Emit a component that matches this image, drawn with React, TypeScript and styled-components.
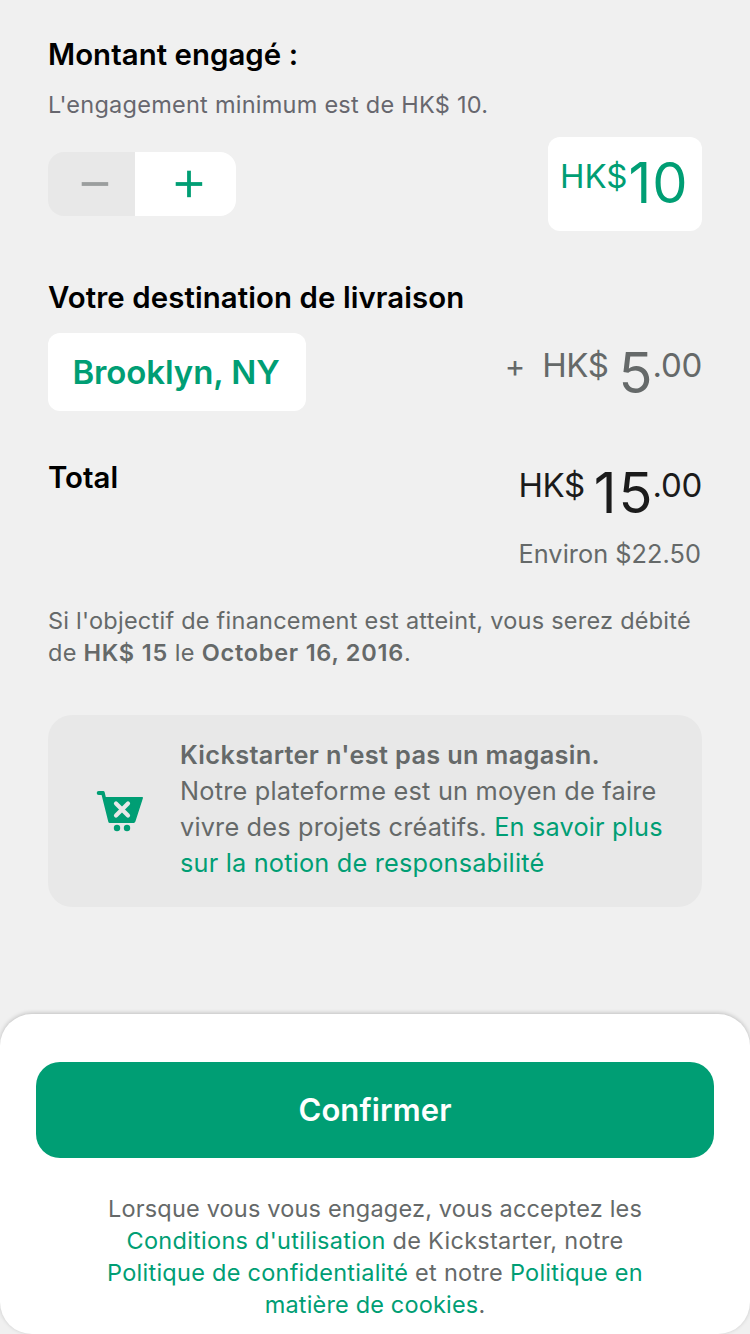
import React from "react";
import styled, { createGlobalStyle } from "styled-components";

const green = "#009e74";
const gray = "#656969";

const GlobalStyle = createGlobalStyle`
  * { box-sizing: border-box; }
  body {
    margin: 0;
    background: #f0f0f0;
    font-family: Inter, "Liberation Sans", sans-serif;
    font-kerning: normal;
  }
  h2, p { margin: 0; }
  button { font: inherit; border: 0; padding: 0; cursor: pointer; }
`;

const Screen = styled.div`
  width: 750px;
  height: 1334px;
  display: flex;
  flex-direction: column;
  justify-content: space-between;
  overflow: hidden;
`;

const Content = styled.main`
  padding: 37px 48px 0;
`;

const Heading = styled.h2<{ $track?: number }>`
  font-size: 29.4px;
  line-height: 36px;
  font-weight: 600;
  color: #000;
  white-space: nowrap;
  letter-spacing: ${(p) => p.$track ?? 0}px;
`;

const Hint = styled.p`
  && { margin-top: 16px; }
  font-size: 23.5px;
  line-height: 32px;
  letter-spacing: 0.25px;
  color: #67676e;
`;

const Row = styled.section<{ $gap: number; $align?: string }>`
  margin-top: ${(p) => p.$gap}px;
  display: flex;
  justify-content: space-between;
  align-items: ${(p) => p.$align ?? "flex-start"};
`;

const Block = styled.section`
  margin-top: 49px;
`;

const Stepper = styled.div`
  display: flex;
  height: 64px;
  border-radius: 16px;
  overflow: hidden;
`;

const StepButton = styled.button<{ $off?: boolean }>`
  display: flex;
  align-items: center;
  justify-content: center;
  width: ${(p) => (p.$off ? 87 : 101)}px;
  padding-left: 7px;
  background: ${(p) => (p.$off ? "#e8e8e8" : "#fff")};
  color: ${(p) => (p.$off ? "#9b9e9e" : green)};
`;

const AmountBox = styled.div`
  width: 154px;
  height: 94px;
  padding: 13px 0 0 12px;
  border-radius: 12px;
  background: #fff;
`;

const Price = styled.div<{ $color: string; $top?: number }>`
  display: flex;
  align-items: flex-start;
  padding-top: ${(p) => p.$top ?? 0}px;
  color: ${(p) => p.$color};
  white-space: pre;
`;

const Big = styled.span<{ $line?: number; $track?: number; $right?: number }>`
  font-size: 56px;
  line-height: ${(p) => p.$line ?? 68}px;
  letter-spacing: ${(p) => p.$track ?? 1}px;
  margin-right: ${(p) => p.$right ?? 0}px;
`;

const Small = styled.span<{ $right?: number; $track?: number }>`
  font-size: 33px;
  line-height: 52px;
  margin-right: ${(p) => p.$right ?? 0}px;
  letter-spacing: ${(p) => p.$track ?? 0}px;
`;

const PlusSign = styled.span`
  font-size: 31px;
  line-height: 54px;
  margin-right: 17px;
`;

const PlaceButton = styled.button`
  width: 258px;
  height: 78px;
  padding-right: 2px;
  border-radius: 12px;
  background: #fff;
  color: ${green};
  font-size: 33px;
  font-weight: 600;
  letter-spacing: -0.1px;
`;

const TotalHeading = styled(Heading)`
  padding-top: 1px;
`;

const Totals = styled.div`
  display: flex;
  flex-direction: column;
  align-items: flex-end;
`;

const Approx = styled.span`
  margin: 11px 1px 0 0;
  font-size: 25.3px;
  line-height: 32px;
  letter-spacing: 0.05px;
  color: ${gray};
`;

const Line = styled.span<{ $track?: number }>`
  display: block;
  white-space: nowrap;
  letter-spacing: ${(p) => p.$track ?? 0.22}px;
`;

const Strong = styled.strong<{ $track?: number }>`
  font-weight: 600;
  letter-spacing: ${(p) => p.$track ?? 0.34}px;
`;

const Link = styled.a`
  color: ${green};
`;

const ChargeNote = styled.p`
  && { margin-top: 35px; }
  font-size: 23.5px;
  line-height: 32px;
  color: ${gray};
`;

const Notice = styled.aside`
  margin-top: 46px;
  height: 192px;
  display: flex;
  align-items: center;
  padding: 0 0 4px 48px;
  border-radius: 24px;
  background: #e8e8e8;
`;

const Cart = styled.svg`
  margin-top: 4px;
`;

const NoticeText = styled.p`
  && { margin-left: 36px; }
  font-size: 25.3px;
  line-height: 36px;
  color: ${gray};
`;

const Footer = styled.footer`
  height: 320px;
  padding: 48px 36px 0;
  border-radius: 32px;
  background: #fff;
  box-shadow: 0 -1px 4px rgba(0, 0, 0, 0.2);
`;

const Confirm = styled.button`
  display: block;
  width: 100%;
  height: 96px;
  padding-bottom: 2px;
  border-radius: 24px;
  background: ${green};
  color: #fff;
  font-size: 31px;
  font-weight: 600;
  letter-spacing: 0.1px;
`;

const Legal = styled.p`
  && { margin-top: 35px; }
  font-size: 23.5px;
  line-height: 32px;
  text-align: center;
  color: ${gray};
`;

function StepIcon({ plus }: { plus?: boolean }) {
  return (
    <svg width="28" height="28" viewBox="0 0 28 28" fill="currentColor">
      <rect x="0.7" y="12.1" width="26.5" height="3.8" />
      {plus && <rect x="12.1" y="0.7" width="3.8" height="26.5" />}
    </svg>
  );
}

function CartIcon() {
  return (
    <Cart width="48" height="42" viewBox="0 0 48 42">
      <path
        fill={green}
        d="M2.7 1H7.2Q8.3 1 8.6 2.1L9.8 7H46.2Q47.3 7 46.9 8.3L39.4 31.6Q39 33 37.6 33H13.8Q12.6 33 12.3 31.8L5.6 5H2.7A2 2 0 0 1 2.7 1Z"
      />
      <path d="M20 13.5l12 12M32 13.5L20 25.5" stroke="#e8e8e8" strokeWidth="4.2" strokeLinecap="round" />
      <circle cx="21" cy="38" r="3.2" fill={green} />
      <circle cx="31" cy="38" r="3.2" fill={green} />
    </Cart>
  );
}

export default function App() {
  return (
    <Screen>
      <GlobalStyle />
      <Content>
        <Heading $track={0.05}>Montant engagé :</Heading>
        <Hint>L'engagement minimum est de HK$ 10.</Hint>
        <Row $gap={16} $align="center">
          <Stepper>
            <StepButton $off aria-label="Diminuer">
              <StepIcon />
            </StepButton>
            <StepButton aria-label="Augmenter">
              <StepIcon plus />
            </StepButton>
          </Stepper>
          <AmountBox>
            <Price $color={green}>
              <Small $right={1}>HK$</Small>
              <Big $line={66}>10</Big>
            </Price>
          </AmountBox>
        </Row>

        <Block>
          <Heading $track={0.09}>Votre destination de livraison</Heading>
          <Row $gap={17}>
            <PlaceButton>Brooklyn, NY</PlaceButton>
            <Price $color={gray} $top={6}>
              <PlusSign>+</PlusSign>
              <Small $right={10} $track={-0.4}>HK$</Small>
              <Big $track={0}>5</Big>
              <Small $track={-0.3}>.00</Small>
            </Price>
          </Row>
        </Block>

        <Row $gap={48}>
          <TotalHeading>Total</TotalHeading>
          <Totals>
            <Price $color="#1b1b1b">
              <Small $right={9} $track={-0.4}>HK$</Small>
              <Big $track={2} $right={-2}>15</Big>
              <Small $track={-0.3}>.00</Small>
            </Price>
            <Approx>Environ $22.50</Approx>
          </Totals>
        </Row>

        <ChargeNote>
          <Line $track={0.245}>Si l'objectif de financement est atteint, vous serez débité</Line>
          <Line $track={0.25}>
            de <Strong $track={0.8}>HK$ 15</Strong> le <Strong $track={0.76}>October 16, 2016</Strong>.
          </Line>
        </ChargeNote>

        <Notice>
          <CartIcon />
          <NoticeText>
            <Line>
              <Strong>Kickstarter n'est pas un magasin.</Strong>
            </Line>
            <Line>Notre plateforme est un moyen de faire</Line>
            <Line $track={0.18}>
              vivre des projets créatifs. <Link>En savoir plus</Link>
            </Line>
            <Line $track={0.19}>
              <Link>sur la notion de responsabilité</Link>
            </Line>
          </NoticeText>
        </Notice>
      </Content>

      <Footer>
        <Confirm>Confirmer</Confirm>
        <Legal>
          <Line $track={0.18}>Lorsque vous vous engagez, vous acceptez les</Line>
          <Line $track={0.27}>
            <Link>Conditions d'utilisation</Link> de Kickstarter, notre
          </Line>
          <Line $track={0.26}>
            <Link>Politique de confidentialité</Link> et notre <Link>Politique en</Link>
          </Line>
          <Line $track={0.17}>
            <Link>matière de cookies</Link>.
          </Line>
        </Legal>
      </Footer>
    </Screen>
  );
}
